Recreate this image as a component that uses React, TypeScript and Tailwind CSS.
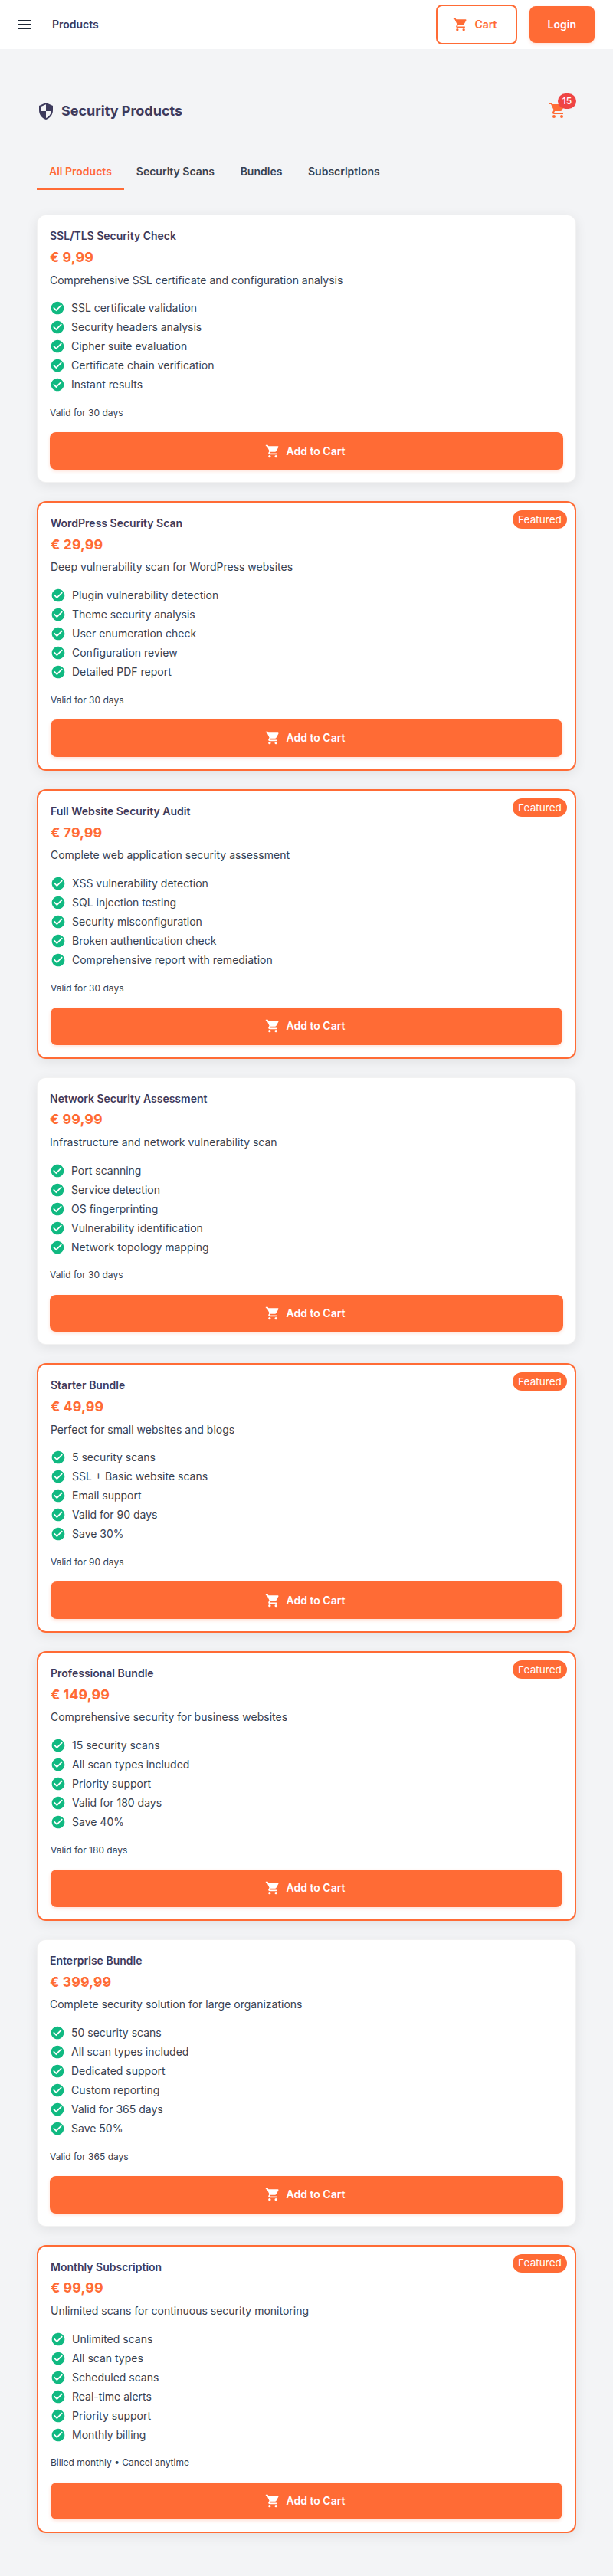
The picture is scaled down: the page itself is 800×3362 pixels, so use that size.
import React from "react";

type Product = {
  name: string;
  price: string;
  description: string;
  features: string[];
  note: string;
  featured?: boolean;
};

const products: Product[] = [
  {
    name: "SSL/TLS Security Check",
    price: "€ 9,99",
    description: "Comprehensive SSL certificate and configuration analysis",
    features: ["SSL certificate validation", "Security headers analysis", "Cipher suite evaluation", "Certificate chain verification", "Instant results"],
    note: "Valid for 30 days",
  },
  {
    name: "WordPress Security Scan",
    price: "€ 29,99",
    description: "Deep vulnerability scan for WordPress websites",
    features: ["Plugin vulnerability detection", "Theme security analysis", "User enumeration check", "Configuration review", "Detailed PDF report"],
    note: "Valid for 30 days",
    featured: true,
  },
  {
    name: "Full Website Security Audit",
    price: "€ 79,99",
    description: "Complete web application security assessment",
    features: ["XSS vulnerability detection", "SQL injection testing", "Security misconfiguration", "Broken authentication check", "Comprehensive report with remediation"],
    note: "Valid for 30 days",
    featured: true,
  },
  {
    name: "Network Security Assessment",
    price: "€ 99,99",
    description: "Infrastructure and network vulnerability scan",
    features: ["Port scanning", "Service detection", "OS fingerprinting", "Vulnerability identification", "Network topology mapping"],
    note: "Valid for 30 days",
  },
  {
    name: "Starter Bundle",
    price: "€ 49,99",
    description: "Perfect for small websites and blogs",
    features: ["5 security scans", "SSL + Basic website scans", "Email support", "Valid for 90 days", "Save 30%"],
    note: "Valid for 90 days",
    featured: true,
  },
  {
    name: "Professional Bundle",
    price: "€ 149,99",
    description: "Comprehensive security for business websites",
    features: ["15 security scans", "All scan types included", "Priority support", "Valid for 180 days", "Save 40%"],
    note: "Valid for 180 days",
    featured: true,
  },
  {
    name: "Enterprise Bundle",
    price: "€ 399,99",
    description: "Complete security solution for large organizations",
    features: ["50 security scans", "All scan types included", "Dedicated support", "Custom reporting", "Valid for 365 days", "Save 50%"],
    note: "Valid for 365 days",
  },
  {
    name: "Monthly Subscription",
    price: "€ 99,99",
    description: "Unlimited scans for continuous security monitoring",
    features: ["Unlimited scans", "All scan types", "Scheduled scans", "Real-time alerts", "Priority support", "Monthly billing"],
    note: "Billed monthly • Cancel anytime",
    featured: true,
  },
];

const tabs = ["All Products", "Security Scans", "Bundles", "Subscriptions"];

const paths = {
  menu: "M3,6H21V8H3V6M3,11H21V13H3V11M3,16H21V18H3V16Z",
  cart: "M17,18C15.89,18 15,18.89 15,20A2,2 0 0,0 17,22A2,2 0 0,0 19,20C19,18.89 18.1,18 17,18M1,2V4H3L6.6,11.59L5.24,14.04C5.09,14.32 5,14.65 5,15A2,2 0 0,0 7,17H19V15H7.42A0.25,0.25 0 0,1 7.17,14.75C7.17,14.7 7.18,14.66 7.2,14.63L8.1,13H15.55C16.3,13 16.96,12.58 17.3,11.97L20.88,5.5C20.95,5.34 21,5.17 21,5A1,1 0 0,0 20,4H5.21L4.27,2M7,18C5.89,18 5,18.89 5,20A2,2 0 0,0 7,22A2,2 0 0,0 9,20C9,18.89 8.1,18 7,18Z",
  security: "M12,12H19C18.47,16.11 15.72,19.78 12,20.92V12H5V6.3L12,3.19M12,1L3,5V11C3,16.55 6.84,21.73 12,23C17.16,21.73 21,16.55 21,11V5L12,1Z",
  check: "M12 2C6.5 2 2 6.5 2 12S6.5 22 12 22 22 17.5 22 12 17.5 2 12 2M10 17L5 12L6.41 10.59L10 14.17L17.59 6.58L19 8L10 17Z",
};

function Icon({ name, className }: { name: keyof typeof paths; className: string }) {
  return (
    <svg viewBox="0 0 24 24" fill="currentColor" aria-hidden="true" className={`shrink-0 ${className}`}>
      <path d={paths[name]} />
    </svg>
  );
}

function ProductCard({ product }: { product: Product }) {
  return (
    <article
      className={`relative flex flex-col rounded-xl bg-white p-4 shadow-[0_4px_16px_rgba(0,0,0,0.08)] ${
        product.featured ? "border-2 border-[#ff6b35]" : "border border-black/5"
      }`}
    >
      {product.featured && (
        <span className="absolute top-2.5 right-2.5 flex h-6 w-[71px] items-center justify-center rounded-xl bg-[#ff6b35] text-[13.6px] text-white">
          Featured
        </span>
      )}
      <h2 className="text-sm leading-[22.4px] font-semibold text-[#3d3a5c]">{product.name}</h2>
      <p className="mt-[2.5px] text-lg leading-[28.8px] font-bold text-[#ff6b35]">{product.price}</p>
      <p className="mt-[3.5px] text-sm leading-[22.4px] text-[#374151]">{product.description}</p>
      <ul className="mt-[13px]">
        {product.features.map((feature) => (
          <li key={feature} className="flex h-[25px] items-center gap-2 text-sm text-[#374151]">
            <Icon name="check" className="size-5 text-[#10b981]" />
            {feature}
          </li>
        ))}
      </ul>
      <p className="mt-[14.2px] text-xs leading-[19.2px] text-[#374151]">{product.note}</p>
      <button className="mt-4 flex h-[48.75px] items-center justify-center gap-2 rounded-lg bg-[#ff6b35] text-sm font-semibold text-white shadow-[0_2px_4px_rgba(255,107,53,0.2)]">
        <Icon name="cart" className="-ml-1 size-5" />
        Add to Cart
      </button>
    </article>
  );
}

export default function App() {
  return (
    <div className="min-h-[3362px] bg-[#f3f4f6] font-['Inter',sans-serif]">
      <header className="flex h-16 items-center bg-white px-5 pr-6">
        <Icon name="menu" className="size-6 text-[#1f2937]" />
        <span className="ml-6 text-sm font-semibold text-[#3d3a5c]">Products</span>
        <div className="ml-auto flex items-center gap-4">
          <button className="flex h-[52.75px] items-center gap-2 rounded-lg border-2 border-[#ff6b35] px-6 text-sm font-semibold text-[#ff6b35]">
            <Icon name="cart" className="-ml-1 size-5" />
            Cart
          </button>
          <button className="flex h-[48.75px] items-center rounded-lg bg-[#ff6b35] px-6 text-sm font-semibold text-white shadow-[0_2px_4px_rgba(255,107,53,0.2)]">
            Login
          </button>
        </div>
      </header>
      <main className="px-12 pt-14">
        <div className="flex h-12 items-center justify-between">
          <h1 className="flex items-center gap-2 pt-px text-lg font-bold text-[#3d3a5c]">
            <Icon name="security" className="size-6" />
            Security Products
          </h1>
          <div className="relative flex size-12 items-center justify-center">
            <Icon name="cart" className="size-6 text-[#ff6b35]" />
            <span className="absolute top-0.5 right-0 flex h-5 w-6 items-center justify-center rounded-[10px] bg-[#ef4444] text-xs font-medium text-white">
              15
            </span>
          </div>
        </div>
        <nav className="mt-8 flex h-12">
          {tabs.map((tab, i) => (
            <a
              key={tab}
              className={`flex min-w-[90px] items-center justify-center border-b-2 px-4 pt-0.5 text-sm font-semibold ${
                i === 0 ? "border-[#ff6b35] text-[#ff6b35]" : "border-transparent text-[#374151]"
              }`}
            >
              {tab}
            </a>
          ))}
        </nav>
        <section className="mt-[32.3px] flex flex-col gap-6">
          {products.map((product) => (
            <ProductCard key={product.name} product={product} />
          ))}
        </section>
      </main>
    </div>
  );
}
